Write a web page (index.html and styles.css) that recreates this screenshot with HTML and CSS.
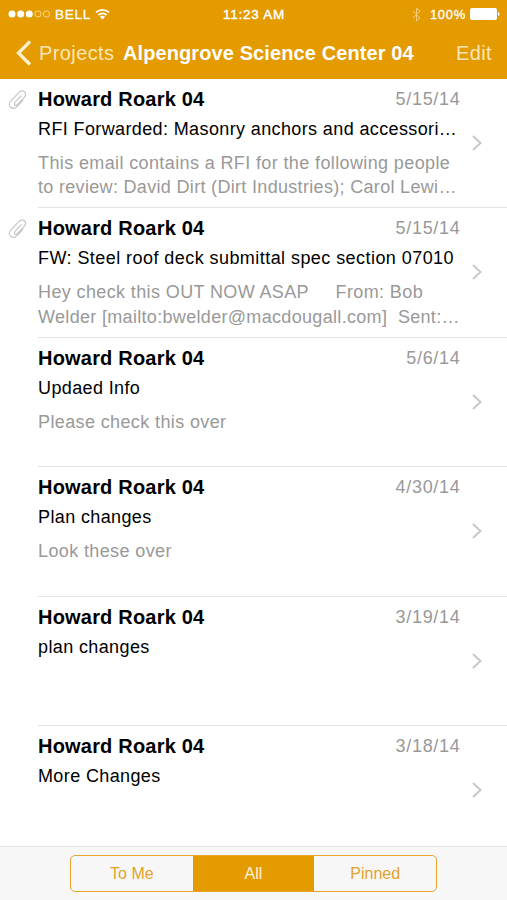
FILE: index.html
```html
<!DOCTYPE html>
<html lang="en">
<head>
<meta charset="utf-8">
<meta name="viewport" content="width=device-width, initial-scale=1">
<title>Alpengrove Science Center 04</title>
<link rel="stylesheet" href="styles.css">
</head>
<body>
<svg class="defs" aria-hidden="true">
<symbol id="chevron" viewBox="0 0 12 18"><path d="M2 2l7.500 7-7.500 7" fill="none" stroke="#c7c7cc" stroke-width="2"/></symbol>
<symbol id="clip" viewBox="0 0 20 22"><path d="M13.300 6.900L7.200 13.100c-1 1.100-1 2.300-.3 2.900.8.700 1.800.4 2.700-.5l6.200-6.600c2-2.200 2.200-4.400.7-5.900-1.600-1.500-4-1.200-5.900.8l-7 7.400c-2.400 2.500-2.800 5.200-1 7 1.900 1.800 4.600 1.300 6.900-1.100l5.200-5.600" fill="none" stroke="#c6c6c6" stroke-width="1.200" stroke-linecap="round"/></symbol>
</svg>
<header class="header">
  <div class="status">
    <div class="carrier">
      <svg class="signal" viewBox="0 0 43 10"><g fill="#fff"><circle cx="4" cy="5" r="3.500"/><circle cx="12.700" cy="5" r="3.500"/><circle cx="21.300" cy="5" r="3.500"/></g><g fill="none" stroke="#fbe4b2" stroke-width=".8"><circle cx="30" cy="5" r="3.100"/><circle cx="38.500" cy="5" r="3.100"/></g></svg>
      <span class="network">BELL</span>
      <svg class="wifi" viewBox="0 0 15 12"><g fill="none" stroke="#fff" stroke-width="1.800"><path d="M1 4.400c3.800-3.500 9.200-3.500 13 0M3.400 7.100c2.400-2.200 5.800-2.200 8.200 0"/></g><path d="M4.900 8.700c1.500-1.300 3.700-1.300 5.200 0l-2.600 2.700z" fill="#fff"/></svg>
    </div>
    <span class="clock">11:23 AM</span>
    <div class="power">
      <svg class="bluetooth" viewBox="0 0 9 15"><path d="M1 4l7 7-3.500 3V1L8 4l-7 7" fill="none" stroke="#f4cb7c" stroke-width="1"/></svg>
      <span class="percent">100%</span>
      <svg class="battery" viewBox="0 0 30 12"><rect width="27" height="12" rx="2" fill="#fff"/><path d="M28 4c2 .5 2 3.500 0 4z" fill="#fff"/></svg>
    </div>
  </div>
  <nav class="nav">
    <a class="back"><svg class="back-icon" viewBox="0 0 16 26"><path d="M14 1.500L2.500 13 14 24.500" fill="none" stroke="#fff0cc" stroke-width="3.300"/></svg><span class="back-label">Projects</span></a>
    <h1 class="title">Alpengrove Science Center 04</h1>
    <a class="edit">Edit</a>
  </nav>
</header>
<main class="list">
  <article class="row">
    <svg class="clip"><use href="#clip"/></svg>
    <div class="message">
      <div class="top"><h2 class="name">Howard Roark 04</h2><time class="date">5/15/14</time></div>
      <p class="subject">RFI Forwarded: Masonry anchors and accessori…</p>
      <p class="preview"><span>This email contains a RFI for the following people</span><br><span class="tight">to review: David Dirt (Dirt Industries); Carol Lewi…</span></p>
      <svg class="chevron"><use href="#chevron"/></svg>
    </div>
  </article>
  <article class="row">
    <svg class="clip"><use href="#clip"/></svg>
    <div class="message">
      <div class="top"><h2 class="name">Howard Roark 04</h2><time class="date">5/15/14</time></div>
      <p class="subject wide">FW: Steel roof deck submittal spec section 07010</p>
      <p class="preview"><span>Hey check this OUT NOW ASAP     From: Bob</span><br><span class="tight">Welder [mailto:bwelder@macdougall.com]  Sent:…</span></p>
      <svg class="chevron"><use href="#chevron"/></svg>
    </div>
  </article>
  <article class="row">
    <div class="message">
      <div class="top"><h2 class="name">Howard Roark 04</h2><time class="date">5/6/14</time></div>
      <p class="subject">Updaed Info</p>
      <p class="preview">Please check this over</p>
      <svg class="chevron"><use href="#chevron"/></svg>
    </div>
  </article>
  <article class="row">
    <div class="message">
      <div class="top"><h2 class="name">Howard Roark 04</h2><time class="date">4/30/14</time></div>
      <p class="subject">Plan changes</p>
      <p class="preview">Look these over</p>
      <svg class="chevron"><use href="#chevron"/></svg>
    </div>
  </article>
  <article class="row">
    <div class="message">
      <div class="top"><h2 class="name">Howard Roark 04</h2><time class="date">3/19/14</time></div>
      <p class="subject">plan changes</p>
      <svg class="chevron"><use href="#chevron"/></svg>
    </div>
  </article>
  <article class="row">
    <div class="message">
      <div class="top"><h2 class="name">Howard Roark 04</h2><time class="date">3/18/14</time></div>
      <p class="subject">More Changes</p>
      <svg class="chevron"><use href="#chevron"/></svg>
    </div>
  </article>
</main>
<footer class="toolbar">
  <div class="segments"><span class="segment">To Me</span><span class="segment active">All</span><span class="segment">Pinned</span></div>
</footer>
</body>
</html>
```
FILE: styles.css
```css
* { box-sizing: border-box; }
body { margin: 0; height: 900px; display: flex; flex-direction: column; overflow: hidden; background: #fff; font-family: "Liberation Sans", Arial, sans-serif; color: #000; }
h1, h2, p { margin: 0; white-space: pre; }
svg { display: block; flex: none; }
.defs { position: absolute; width: 0; height: 0; }
.header { height: 79px; flex: none; background: #e39b00; color: #fff; }
.status { height: 28px; display: grid; grid-template-columns: 1fr auto 1fr; align-items: center; padding: 0 7px 0 8px; font-size: 13px; }
.carrier, .power { display: flex; align-items: center; }
.power { justify-content: flex-end; }
.signal { width: 43px; height: 10px; }
.network { margin-left: 4px; font-size: 13.5px; letter-spacing: .75px; -webkit-text-stroke: .3px; }
.wifi { width: 15px; height: 12px; margin-left: 4px; }
.clock { font-size: 13.5px; letter-spacing: .75px; -webkit-text-stroke: .4px; }
.bluetooth { width: 9px; height: 15px; margin-right: 9px; }
.percent { letter-spacing: .7px; -webkit-text-stroke: .3px; }
.battery { width: 30px; height: 12px; margin-left: 4px; }
.nav { height: 50px; display: flex; align-items: center; padding: 0 15px 0 16px; }
.back { display: flex; align-items: center; color: #fce5b7; }
.back-icon { width: 16px; height: 26px; }
.back-label { margin-left: 7px; font-size: 20px; letter-spacing: .4px; width: 76px; white-space: nowrap; }
.title { margin-left: 8px; font-size: 20px; font-weight: bold; letter-spacing: .1px; }
.edit { margin-left: auto; font-size: 20px; letter-spacing: .4px; color: #fce5b7; }
.list { flex: 1; min-height: 0; overflow: hidden; }
.row { position: relative; height: 129.4px; padding-left: 38px; }
.clip { position: absolute; left: 8px; top: 10px; width: 20px; height: 22px; }
.message { position: relative; height: 100%; padding: 8.450px 47px 0 0; border-bottom: 1px solid #e3e3e5; }
.row:last-child .message { border-bottom: 0; }
.top { display: flex; justify-content: space-between; align-items: center; height: 24px; }
.name { font-size: 20px; font-weight: bold; letter-spacing: .2px; }
.date { font-size: 18px; color: #999; letter-spacing: .7px; margin-right: -.5px; }
.subject { margin-top: 5.500px; height: 24px; line-height: 24px; font-size: 18px; letter-spacing: .38px; }
.subject.wide { letter-spacing: .44px; }
.preview { margin-top: 10px; line-height: 24.5px; font-size: 18px; letter-spacing: .38px; color: #999; }
.preview .tight { letter-spacing: .32px; }
.chevron { position: absolute; right: 24px; top: 55px; width: 12px; height: 18px; }
.toolbar { flex: none; height: 54px; border-top: 1.500px solid #e4e4e4; background: #f7f7f7; padding-top: 8px; }
.segments { display: flex; width: 367px; height: 37px; margin-left: 70px; border: 1.500px solid #e5a52b; border-radius: 5px; overflow: hidden; }
.segment { flex: 1; display: flex; align-items: center; justify-content: center; font-size: 16px; color: #e3a22b; }
.segment.active { background: #e39b00; color: #fff2d6; }
```
